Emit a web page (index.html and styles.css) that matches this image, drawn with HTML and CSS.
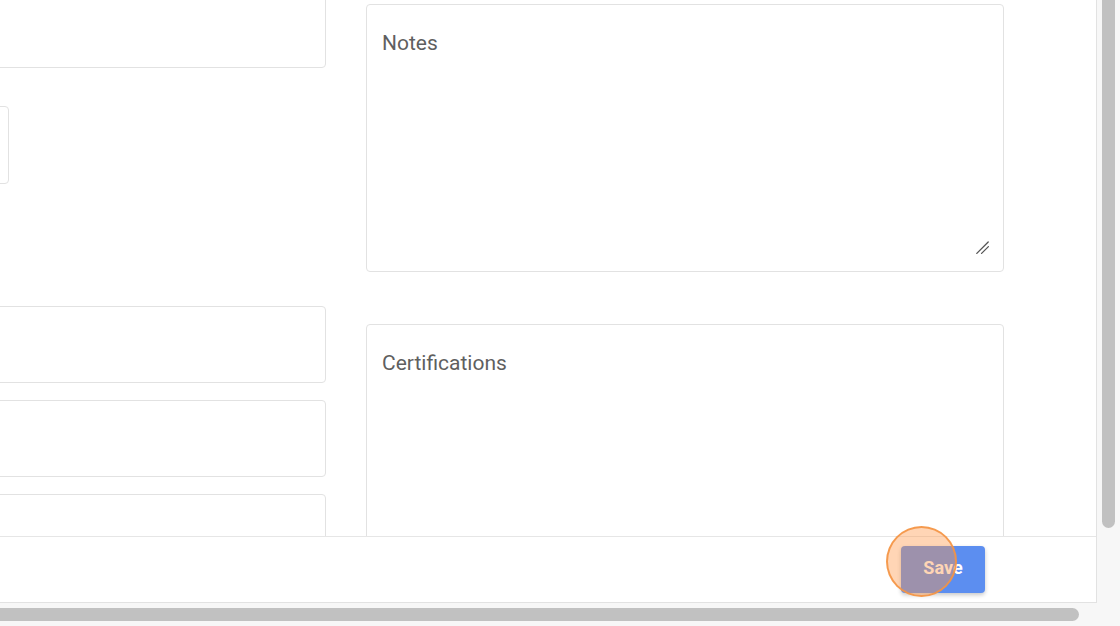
FILE: index.html
```html
<!DOCTYPE html>
<html lang="en">
<head>
<meta charset="utf-8">
<title>Form</title>
<link rel="stylesheet" href="styles.css">
</head>
<body>
<div class="window">
  <div class="panel">
    <div class="scroller">
      <form class="form">
        <div class="col col-left">
          <input class="field field-first" type="text" aria-label="Field">
          <input class="field field-short" type="text" aria-label="Field">
          <input class="field" type="text" aria-label="Field">
          <input class="field" type="text" aria-label="Field">
          <input class="field" type="text" aria-label="Field">
        </div>
        <div class="col col-right">
          <div class="area">
            <textarea class="area-input" placeholder="Notes"></textarea>
            <svg class="grip" width="13" height="13" viewBox="0 0 13 13" aria-hidden="true">
              <path d="M0.8 12.4 L12.2 1" stroke="#555" stroke-width="1.3" stroke-linecap="round" fill="none"/>
              <path d="M5.6 12.4 L12.4 5.6" stroke="#555" stroke-width="1.3" stroke-linecap="round" fill="none"/>
            </svg>
          </div>
          <div class="area">
            <textarea class="area-input" placeholder="Certifications"></textarea>
          </div>
        </div>
      </form>
    </div>
    <div class="footer">
      <button class="save" type="button">Save</button>
    </div>
  </div>
  <div class="vtrack"><div class="vthumb"></div></div>
  <div class="htrack"><div class="hthumb"></div></div>
  <div class="corner"></div>
  <div class="click-marker"></div>
</div>
</body>
</html>
```
FILE: styles.css
```css
html, body {
  margin: 0;
  padding: 0;
  background: #f7f7f7;
  overflow: hidden;
}

.window {
  position: relative;
  width: 1120px;
  height: 626px;
  display: grid;
  grid-template-columns: 1097px 23px;
  grid-template-rows: 603px 23px;
  background: #f7f7f7;
  font-family: Roboto, "Liberation Sans", sans-serif;
}

.panel {
  background: #ffffff;
  border-right: 1px solid #e2e2e2;
  border-bottom: 1px solid #e2e2e2;
  display: flex;
  flex-direction: column;
  overflow: hidden;
}

.scroller {
  height: 536px;
  flex: none;
  overflow: hidden;
}

.form {
  display: grid;
  grid-template-columns: 700px 638px;
  column-gap: 40px;
  align-items: start;
  margin: 0 0 0 -374px;
}

.col {
  display: flex;
  flex-direction: column;
}

.col-left {
  margin-top: -10px;
  gap: 17px;
}

.field {
  box-sizing: border-box;
  width: 700px;
  height: 77px;
  margin: 0;
  border: 1px solid #e2e2e2;
  border-radius: 4px;
  background: #ffffff;
  font: 16px Roboto, "Liberation Sans", sans-serif;
  outline: none;
}

.field-first {
  height: 78px;
  margin-bottom: 21px;
}

.field-short {
  width: 383px;
  height: 78px;
  margin-bottom: 105px;
}

.col-right {
  padding-top: 4px;
  gap: 52px;
}

.area {
  position: relative;
  box-sizing: border-box;
  height: 268px;
  border: 1px solid #e2e2e2;
  border-radius: 4px;
  padding: 26px 15px 17px 15px;
  display: flex;
}

.area-input {
  flex: 1;
  border: none;
  outline: none;
  padding: 0;
  margin: 0;
  resize: none;
  font: 21px/24px Roboto, "Liberation Sans", sans-serif;
  color: #5f5f5f;
  background: transparent;
}

.area-input::placeholder {
  color: #5f5f5f;
  opacity: 1;
}

.grip {
  position: absolute;
  right: 14px;
  bottom: 17px;
  pointer-events: none;
}

.footer {
  box-sizing: border-box;
  height: 66px;
  border-top: 1px solid #e6e6e6;
  display: flex;
  justify-content: flex-end;
  align-items: center;
  padding-right: 111px;
}

.save {
  width: 84px;
  height: 47px;
  padding: 0 0 3px 0;
  border: none;
  border-radius: 4px;
  background: #5c8ef0;
  color: #ffffff;
  font: 700 18px/20px Roboto, "Liberation Sans", sans-serif;
  box-shadow: 0 2px 4px rgba(0, 0, 0, 0.22);
  cursor: pointer;
}

.vtrack {
  background: #f7f7f7;
  padding-left: 5px;
}

.vthumb {
  width: 13px;
  height: 528px;
  background: #c1c1c1;
  border-radius: 0 0 7px 7px;
}

.htrack {
  background: #f7f7f7;
  padding-top: 5px;
}

.hthumb {
  width: 1079px;
  height: 13px;
  background: #c1c1c1;
  border-radius: 0 7px 7px 0;
}

.corner {
  background: #f7f7f7;
}

.click-marker {
  position: absolute;
  left: 886px;
  top: 526px;
  width: 67px;
  height: 67px;
  border: 2px solid rgba(244, 148, 68, 0.9);
  border-radius: 50%;
  background: rgba(255, 150, 70, 0.4);
  pointer-events: none;
}
```
